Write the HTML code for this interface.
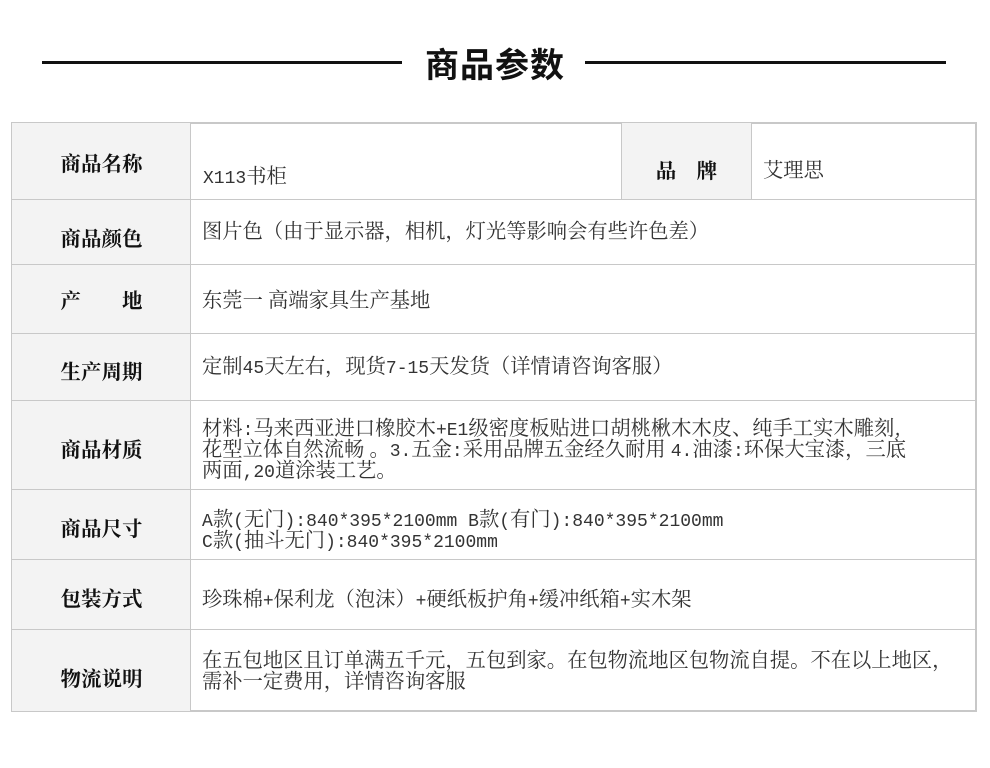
<!DOCTYPE html>
<html><head><meta charset="utf-8"><style>
body{margin:0;width:990px;height:768px;background:#fff;position:relative;overflow:hidden;font-family:"Noto Serif CJK SC",serif;color:#333}
.t{position:absolute;left:0;width:990px;top:38px;text-align:center;font:bold 34px "Liberation Sans","Noto Sans CJK SC",sans-serif;color:#111;letter-spacing:1px}
.ln{position:absolute;top:61px;height:3px;background:#111}
.b{position:absolute;box-sizing:border-box;border:1px solid #c8c8c8}
.lb{background:#f3f3f3;font:bold 20.5px "Noto Serif CJK SC",serif;color:#111;display:flex;align-items:center;justify-content:center;border-width:0}
.h{position:absolute;left:12px;width:964px;height:1px;background:#c8c8c8}
.v{position:absolute;font-size:20.3px;line-height:21px;height:21px;color:#333;font-family:"Noto Serif CJK SC",serif;white-space:nowrap}
.m{font-family:"Liberation Mono","Noto Serif CJK SC",monospace;font-size:18px;line-height:1}
</style></head><body>
<div class="t">商品参数</div>
<div class="ln" style="left:42px;width:360px"></div>
<div class="ln" style="left:585px;width:361px"></div>

<div class="b" style="left:11px;top:122px;width:966px;height:590px;border-width:2px"></div>
<div class="b lb" style="left:12px;top:123px;width:179px;height:77px">商品名称</div>
<div class="b lb" style="left:621px;top:123px;width:131px;height:77px;padding-top:14px">品　牌</div>
<div class="b lb" style="left:12px;top:199px;width:179px;height:66px;padding-top:10px">商品颜色</div>
<div class="b lb" style="left:12px;top:264px;width:179px;height:70px">产　　地</div>
<div class="b lb" style="left:12px;top:333px;width:179px;height:68px;padding-top:6px">生产周期</div>
<div class="b lb" style="left:12px;top:400px;width:179px;height:90px;padding-top:6px">商品材质</div>
<div class="b lb" style="left:12px;top:489px;width:179px;height:71px;padding-top:4px">商品尺寸</div>
<div class="b lb" style="left:12px;top:559px;width:179px;height:71px;padding-top:4px">包装方式</div>
<div class="b lb" style="left:12px;top:629px;width:179px;height:82px;padding-top:14px">物流说明</div>
<div style="position:absolute;left:190px;top:123px;width:1px;height:588px;background:#c8c8c8"></div>
<div style="position:absolute;left:621px;top:123px;width:1px;height:77px;background:#c8c8c8"></div>
<div style="position:absolute;left:751px;top:123px;width:1px;height:77px;background:#c8c8c8"></div>
<div class="h" style="top:199px"></div>
<div class="h" style="top:264px"></div>
<div class="h" style="top:333px"></div>
<div class="h" style="top:400px"></div>
<div class="h" style="top:489px"></div>
<div class="h" style="top:559px"></div>
<div class="h" style="top:629px"></div>

<div class="v" style="left:203px;top:164px"><span class="m">X113</span>书柜</div>
<div class="v" style="left:763px;top:158px">艾理思</div>
<div class="v" style="left:202px;top:219px">图片色（由于显示器，相机，灯光等影响会有些许色差）</div>
<div class="v" style="left:202px;top:288px">东莞一 高端家具生产基地</div>
<div class="v" style="left:202px;top:354px">定制<span class="m">45</span>天左右，现货<span class="m">7-15</span>天发货（详情请咨询客服）</div>
<div class="v" style="left:202px;top:416px">材料<span class="m">:</span>马来西亚进口橡胶木<span class="m">+E1</span>级密度板贴进口胡桃楸木木皮、纯手工实木雕刻,</div>
<div class="v" style="left:202px;top:437px">花型立体自然流畅 。<span class="m">3.</span>五金<span class="m">:</span>采用品牌五金经久耐用 <span class="m">4.</span>油漆<span class="m">:</span>环保大宝漆，三底</div>
<div class="v" style="left:202px;top:458px">两面<span class="m">,20</span>道涂装工艺。</div>
<div class="v" style="left:202px;top:507px"><span class="m">A</span>款<span class="m">(</span>无门<span class="m">):840*395*2100mm  B</span>款<span class="m">(</span>有门<span class="m">):840*395*2100mm</span></div>
<div class="v" style="left:202px;top:528px"><span class="m">C</span>款<span class="m">(</span>抽斗无门<span class="m">):840*395*2100mm</span></div>
<div class="v" style="left:202px;top:587px">珍珠棉<span class="m">+</span>保利龙（泡沫）<span class="m">+</span>硬纸板护角<span class="m">+</span>缓冲纸箱<span class="m">+</span>实木架</div>
<div class="v" style="left:202px;top:648px">在五包地区且订单满五千元，五包到家。在包物流地区包物流自提。不在以上地区，</div>
<div class="v" style="left:202px;top:669px">需补一定费用，详情咨询客服</div>
</body></html>
